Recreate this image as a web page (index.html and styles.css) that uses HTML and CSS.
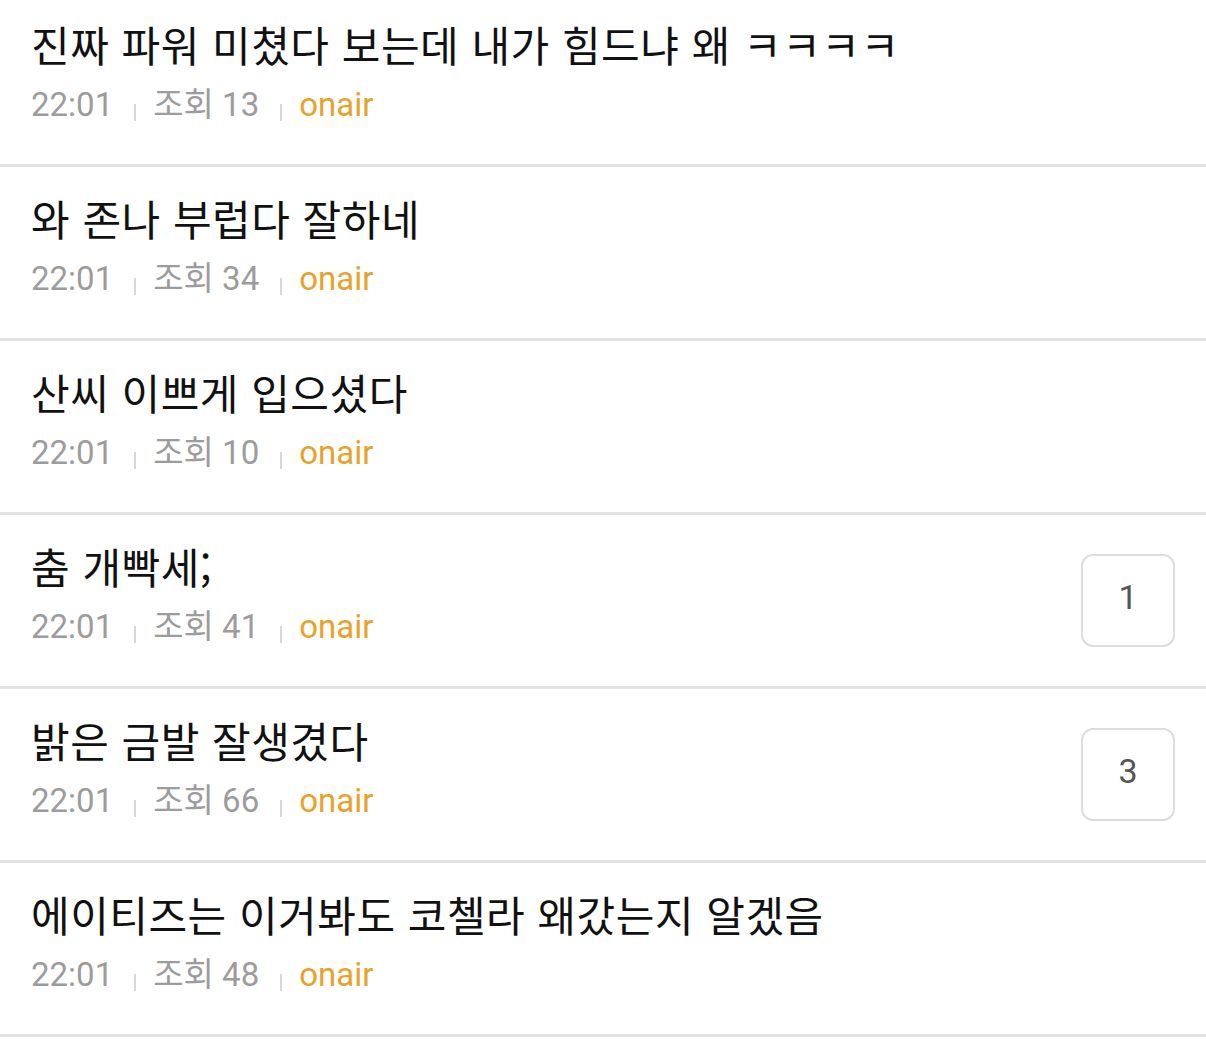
FILE: index.html
```html
<!DOCTYPE html>
<html lang="ko">
<head>
<meta charset="utf-8">
<link rel="stylesheet" href="styles.css">
</head>
<body>
<ul class="list">
  <li class="item">
    <div class="body">
      <div class="title">진짜 파워 미쳤다 보는데 내가 힘드냐 왜 ㅋㅋㅋㅋ</div>
      <div class="meta"><span class="time">22:01</span><span class="sep"></span><span class="views">조회 13</span><span class="sep"></span><span class="board">onair</span></div>
    </div>
  </li>
  <li class="item">
    <div class="body">
      <div class="title">와 존나 부럽다 잘하네</div>
      <div class="meta"><span class="time">22:01</span><span class="sep"></span><span class="views">조회 34</span><span class="sep"></span><span class="board">onair</span></div>
    </div>
  </li>
  <li class="item">
    <div class="body">
      <div class="title">산씨 이쁘게 입으셨다</div>
      <div class="meta"><span class="time">22:01</span><span class="sep"></span><span class="views">조회 10</span><span class="sep"></span><span class="board">onair</span></div>
    </div>
  </li>
  <li class="item">
    <div class="body">
      <div class="title">춤 개빡세;</div>
      <div class="meta"><span class="time">22:01</span><span class="sep"></span><span class="views">조회 41</span><span class="sep"></span><span class="board">onair</span></div>
    </div>
    <div class="count">1</div>
  </li>
  <li class="item">
    <div class="body">
      <div class="title">밝은 금발 잘생겼다</div>
      <div class="meta"><span class="time">22:01</span><span class="sep"></span><span class="views">조회 66</span><span class="sep"></span><span class="board">onair</span></div>
    </div>
    <div class="count">3</div>
  </li>
  <li class="item">
    <div class="body">
      <div class="title">에이티즈는 이거봐도 코첼라 왜갔는지 알겠음</div>
      <div class="meta"><span class="time">22:01</span><span class="sep"></span><span class="views">조회 48</span><span class="sep"></span><span class="board">onair</span></div>
    </div>
  </li>
</ul>
</body>
</html>
```

FILE: styles.css
```css
html, body {
  margin: 0;
  padding: 0;
  background: #ffffff;
}

body {
  font-family: "Noto Sans CJK KR", "Noto Sans", sans-serif;
  overflow: hidden;
}

.list {
  list-style: none;
  margin: -7px 0 0 0;
  padding: 0;
}

.item {
  display: flex;
  align-items: center;
  padding: 26px 31px 39px 31px;
  border-bottom: 3px solid #e3e3e3;
}

.body {
  flex: 1;
  min-width: 0;
  display: flex;
  flex-direction: column;
  gap: 16px;
}

.title {
  font-size: 42px;
  line-height: 50px;
  letter-spacing: 0.5px;
  color: #111111;
  white-space: nowrap;
}

.meta {
  display: flex;
  align-items: flex-start;
  font-family: Roboto, "Noto Sans CJK KR", sans-serif;
  font-size: 33px;
  line-height: 40px;
  color: #9c9c9c;
}

.sep {
  width: 2px;
  height: 17px;
  margin: 19px 17px 0 21px;
  background: #d8d8d8;
}

.board {
  color: #e8a22c;
}

.count {
  width: 90px;
  height: 81px;
  padding-bottom: 8px;
  border: 2px solid #dddddd;
  border-radius: 12px;
  display: flex;
  align-items: center;
  justify-content: center;
  font-family: Roboto, sans-serif;
  font-size: 34px;
  line-height: 1;
  color: #555555;
  margin-top: 13px;
}
```
